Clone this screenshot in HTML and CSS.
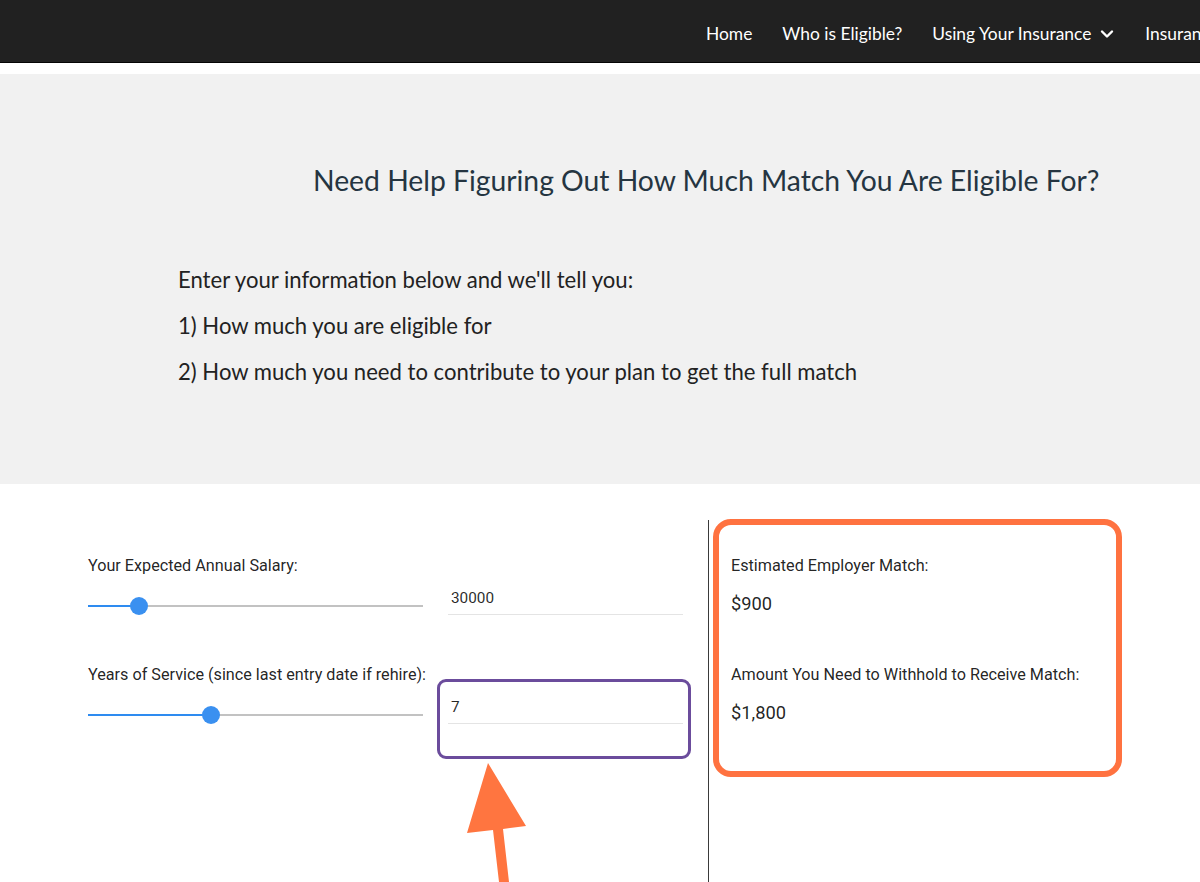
FILE: index.html
```html
<!DOCTYPE html>
<html lang="en">
<head>
<meta charset="utf-8">
<title>Match Calculator</title>
<link rel="stylesheet" href="styles.css">
</head>
<body>
<header class="topbar">
  <nav class="nav">
    <a class="nav-item" href="#">Home</a>
    <a class="nav-item" href="#">Who is Eligible?</a>
    <a class="nav-item" href="#">Using Your Insurance
      <svg class="chev" width="14" height="10" viewBox="0 0 14 10"><path d="M2 2.5 L7 7.5 L12 2.5" fill="none" stroke="#fff" stroke-width="2.4" stroke-linecap="round" stroke-linejoin="round"/></svg>
    </a>
    <a class="nav-item" href="#">Insuran</a>
  </nav>
</header>

<section class="hero">
  <h1 class="hero-title">Need Help Figuring Out How Much Match You Are Eligible For?</h1>
  <div class="intro">
    <p>Enter your information below and we'll tell you:</p>
    <p>1) How much you are eligible for</p>
    <p>2) How much you need to contribute to your plan to get the full match</p>
  </div>
</section>

<section class="calc">
  <div class="inputs">
    <div class="field">
      <div class="label">Your Expected Annual Salary:</div>
      <div class="controls">
        <div class="slider">
          <div class="track"></div>
          <div class="fill" style="width: 51px"></div>
          <div class="thumb" style="left: 51px"></div>
        </div>
        <input class="num" type="text" value="30000">
      </div>
    </div>
    <div class="field">
      <div class="label">Years of Service (since last entry date if rehire):</div>
      <div class="controls">
        <div class="slider">
          <div class="track"></div>
          <div class="fill" style="width: 123px"></div>
          <div class="thumb" style="left: 123px"></div>
        </div>
        <input class="num" type="text" value="7">
      </div>
    </div>
  </div>
  <div class="results">
    <div class="result">
      <div class="rlabel">Estimated Employer Match:</div>
      <div class="rvalue">$900</div>
    </div>
    <div class="result">
      <div class="rlabel">Amount You Need to Withhold to Receive Match:</div>
      <div class="rvalue">$1,800</div>
    </div>
  </div>
</section>

<div class="mark mark-orange"></div>
<div class="mark mark-purple"></div>
<svg class="arrow" width="1200" height="882" viewBox="0 0 1200 882">
  <polygon points="488,763 467,833 493,830 499,882 509,882 503,829 526,826" fill="#ff7540"/>
</svg>
</body>
</html>
```

FILE: styles.css
```css
html, body {
  margin: 0;
  padding: 0;
  background: #ffffff;
}

body {
  font-family: "Roboto", "Liberation Sans", sans-serif;
  overflow: hidden;
  height: 882px;
  position: relative;
}

.topbar {
  height: 62px;
  background: #212121;
  border-bottom: 1px solid #050505;
  overflow: hidden;
}

.nav {
  display: flex;
  gap: 30px;
  margin-left: 706px;
  white-space: nowrap;
  height: 62px;
  align-items: center;
  padding-top: 4px;
  box-sizing: border-box;
}

.nav-item {
  font-family: "Lato", sans-serif;
  font-size: 17.4px;
  color: #ffffff;
  text-decoration: none;
  display: flex;
  align-items: center;
  gap: 9px;
}

.chev {
  margin-top: 1px;
  margin-right: 1px;
}

.hero {
  margin-top: 11px;
  height: 410px;
  background: #f1f1f1;
  box-sizing: border-box;
  padding-top: 90px;
}

.hero-title {
  margin: 0 0 0 313px;
  font-family: "Lato", sans-serif;
  font-weight: 400;
  font-size: 28.3px;
  line-height: 32px;
  color: #253541;
}

.intro {
  margin: 61px 0 0 178px;
  font-family: "Lato", sans-serif;
  font-size: 22.1px;
  color: #222222;
}

.intro p {
  margin: 0;
  line-height: 46px;
}

.calc {
  display: flex;
  padding-top: 36px;
  min-height: 400px;
}

.inputs {
  width: 620px;
  padding: 36px 0 0 88px;
  box-sizing: content-box;
}

.field {
  height: 109px;
}

.label {
  font-size: 16.2px;
  line-height: 20px;
  color: rgba(0, 0, 0, 0.87);
}

.controls {
  display: flex;
  align-items: flex-start;
  gap: 25px;
  margin-top: 4px;
}

.slider {
  position: relative;
  width: 335px;
  height: 20px;
  margin-top: 16px;
}

.track {
  position: absolute;
  left: 0;
  right: 0;
  top: 9px;
  height: 2px;
  background: #c2c2c2;
}

.fill {
  position: absolute;
  left: 0;
  top: 9px;
  height: 2px;
  background: #2e8bf0;
}

.thumb {
  position: absolute;
  top: 1px;
  width: 18px;
  height: 18px;
  margin-left: -9px;
  border-radius: 50%;
  background: #3a90f0;
}

.num {
  width: 235px;
  height: 35px;
  box-sizing: border-box;
  border: none;
  border-bottom: 1px solid #e4e4e4;
  padding: 1px 3px 0;
  font-family: "Roboto", sans-serif;
  font-size: 15.3px;
  color: rgba(0, 0, 0, 0.85);
  background: transparent;
  outline: none;
}

.results {
  flex: 1;
  border-left: 1px solid #3a3a3a;
  padding: 36px 0 0 22px;
}

.result {
  height: 109px;
}

.rlabel {
  font-size: 16.2px;
  line-height: 20px;
  color: rgba(0, 0, 0, 0.87);
}

.rvalue {
  margin-top: 18px;
  font-size: 18.3px;
  line-height: 20px;
  color: rgba(0, 0, 0, 0.87);
}

.mark {
  position: absolute;
  box-sizing: border-box;
  pointer-events: none;
}

.mark-orange {
  left: 713px;
  top: 519px;
  width: 409px;
  height: 258px;
  border: 6px solid #ff7240;
  border-radius: 18px;
}

.mark-purple {
  left: 437px;
  top: 679px;
  width: 254px;
  height: 80px;
  border: 3px solid #6b4c9c;
  border-radius: 9px;
}

.arrow {
  position: absolute;
  left: 0;
  top: 0;
  pointer-events: none;
}
```
